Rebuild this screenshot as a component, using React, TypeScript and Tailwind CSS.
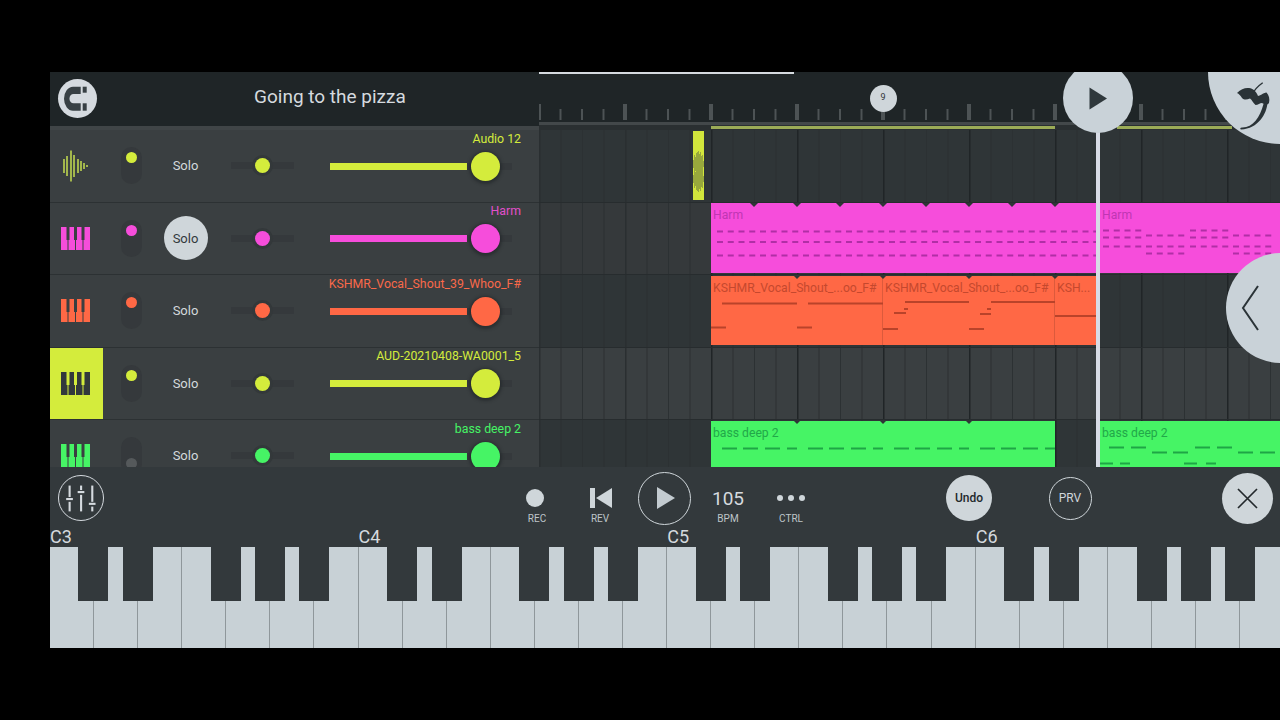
import type { ReactNode } from "react";

const LIME = "#d4ec3c";
const DARK_KEY = "#33393c";

type Note = [number, number, number]; // x, y, width in screen coords

const TRACKS = [
  { name: "Audio 12", color: "#d4ec3c", labelColor: "#d4ec3c", kind: "wave" },
  { name: "Harm", color: "#f64ddb", labelColor: "#e24fcb", kind: "keys", solo: true },
  { name: "KSHMR_Vocal_Shout_39_Whoo_F#", color: "#ff6845", labelColor: "#f9694a", kind: "keys" },
  { name: "AUD-20210408-WA0001_5", color: "#d4ec3c", labelColor: "#d4ec3c", kind: "keys", selected: true },
  { name: "bass deep 2", color: "#46f465", labelColor: "#46f465", kind: "keys", off: true },
];

function repeatDashes(start: number, end: number, ys: number[]): Note[] {
  const out: Note[] = [];
  for (const y of ys) {
    for (let x = start; x < end; x += 10.75) out.push([x, y, 6]);
  }
  return out;
}

const harmNotes: Note[] = [
  ...repeatDashes(717, 1096, [230, 240.5, 254]),
  ...repeatDashes(1103, 1142, [229, 236, 245]),
  ...repeatDashes(1146, 1183, [234, 245, 252]),
  ...repeatDashes(1190, 1228, [229, 236, 245]),
  ...repeatDashes(1233, 1271, [234, 245, 252]),
];

const orangeNotes: Note[] = [
  [722, 302.5, 75],
  [808, 302.5, 75],
  [711, 326.5, 15],
  [797, 326.5, 15],
  [905, 301, 64],
  [904, 308, 4],
  [894, 312, 12],
  [883, 328, 15],
  [991, 301, 64],
  [987, 308, 4],
  [980, 313, 11],
  [969, 328, 15],
  [1055, 315, 41],
];

const greenNotes: Note[] = [
  ...[722, 808, 894, 980].flatMap((x): Note[] => [
    [x, 447.5, 15],
    [x + 21, 447.5, 15],
    [x + 43, 447.5, 15],
    [x + 65, 447.5, 10],
  ]),
  [1109, 446.5, 15],
  [1131, 446.5, 15],
  [1152, 451.5, 15],
  [1173, 451.5, 15],
  [1195, 446.5, 15],
  [1217, 446.5, 15],
  [1238, 451.5, 15],
  [1260, 451.5, 15],
  [1100, 462.5, 13],
  [1120, 462.5, 10],
  [1184, 462.5, 13],
  [1206, 462.5, 10],
];

function PianoIcon({ fill, notch }: { fill: string; notch: string }) {
  return (
    <svg width="29" height="23" viewBox="0 0 29 23">
      {[0, 7.5, 15, 22.5].map((x) => (
        <rect key={x} x={x} width="6.5" height="23" fill={fill} />
      ))}
      {[5.5, 13, 20.5].map((x) => (
        <rect key={x} x={x} width="3" height="13" fill={notch} />
      ))}
    </svg>
  );
}

function WaveIcon() {
  const bars = [
    [3, 14],
    [6, 20],
    [10, 31],
    [13, 22],
    [17, 14],
    [20, 10],
    [23, 6],
    [26, 2],
  ];
  return (
    <svg width="28" height="32" viewBox="0 0 28 32">
      {bars.map(([x, h]) => (
        <rect key={x} x={x - 1} y={16 - h / 2} width="2" height={h} fill="#a2b64c" />
      ))}
    </svg>
  );
}

function TrackRow({ track }: { track: (typeof TRACKS)[number] }) {
  return (
    <div className="flex h-[72.5px] shrink-0 items-center border-b border-[#2c3133]">
      <div
        className={`flex h-full w-[53px] shrink-0 items-center justify-center pr-[3px] ${track.selected ? "bg-[#d4ec3c]" : ""}`}
      >
        {track.kind === "wave" ? (
          <WaveIcon />
        ) : (
          <PianoIcon
            fill={track.selected ? DARK_KEY : track.color}
            notch={track.selected ? LIME : "#3a3f41"}
          />
        )}
      </div>

      <div
        className={`ml-[17.5px] flex h-[37px] w-[21px] shrink-0 flex-col items-center rounded-full bg-[#35393c] py-[5px] ${track.off ? "justify-end" : "justify-start"}`}
      >
        <span
          className="size-[11px] rounded-full"
          style={{ backgroundColor: track.off ? "#55595b" : track.color }}
        />
      </div>

      <div
        className={`ml-[22px] flex size-11 shrink-0 items-center justify-center rounded-full text-[13px] ${track.solo ? "bg-[#cfd6da] text-[#33393c]" : "text-[#d3d9dc]"}`}
      >
        Solo
      </div>

      <div className="relative ml-[23.5px] flex h-[7px] w-[63px] shrink-0 items-center justify-center rounded-[1px] bg-[#35393c]">
        <span
          className="size-[15px] rounded-full shadow-[0_0_0_3px_#33383a]"
          style={{ backgroundColor: track.color }}
        />
      </div>

      <div className="ml-9 flex h-full w-[191px] shrink-0 flex-col items-end">
        <p
          className="mt-[0.5px] h-4 whitespace-nowrap text-[12.3px] leading-4"
          style={{ color: track.labelColor }}
        >
          {track.name}
        </p>
        <div className="relative mt-[5px] flex h-[29px] w-[191px] items-center">
          <div className="h-[7px] w-[182px] bg-[#35393c]">
            <div className="h-full w-[137px]" style={{ backgroundColor: track.color }} />
          </div>
          <span
            className="absolute left-[140.5px] top-0 size-[29px] rounded-full shadow-[0_1px_3px_2px_rgba(32,36,38,0.6)]"
            style={{ backgroundColor: track.color }}
          />
        </div>
      </div>
    </div>
  );
}

function Lane({
  top,
  className,
  children,
  notes,
  noteColor,
  marks = [],
}: {
  top: number;
  className: string;
  children?: ReactNode;
  notes?: Note[];
  noteColor?: string;
  marks?: number[];
}) {
  const box = `539 ${top} 741 72.5`;
  return (
    <div className={`relative h-[72.5px] shrink-0 overflow-hidden ${className}`}>
      <svg className="absolute inset-0 h-full w-full" viewBox={box}>
        {Array.from({ length: 35 }, (_, i) => {
          const x = 539 + 21.5 * i;
          const major = i % 4 === 0;
          return (
            <rect
              key={i}
              x={x}
              y={top}
              width={major ? 1.5 : 1}
              height="72.5"
              fill={major ? (x < 711 ? "#2a2f31" : "#202527") : "#2c3133"}
            />
          );
        })}
      </svg>
      {children}
      <svg className="absolute inset-0 h-full w-full" viewBox={box}>
        {notes?.map(([x, y, w], i) => (
          <rect key={i} x={x} y={y} width={w} height="2" fill={noteColor} />
        ))}
        {marks.map((x) => (
          <path key={x} d={`M${x - 4} ${top} h8 l-4 4 z`} fill="#2f3537" />
        ))}
      </svg>
      <div className="absolute inset-x-0 bottom-0 h-px bg-[#272c2e]" />
    </div>
  );
}

function Clip({ className, label, color }: { className: string; label: string; color: string }) {
  return (
    <div
      className={`absolute overflow-hidden whitespace-nowrap pl-[2px] text-[12.2px] leading-none ${className}`}
      style={{ color }}
    >
      <p className="mt-[6px]">{label}</p>
    </div>
  );
}

function Ruler() {
  return (
    <svg className="h-[50px] w-[741px]" viewBox="539 72 741 50">
      {Array.from({ length: 35 }, (_, i) => {
        const major = i % 4 === 0;
        const x = 539 + 21.5 * i;
        return (
          <rect
            key={i}
            x={major ? x - 2 : x - 1}
            y={major ? 104 : 109}
            width={major ? 4 : 2}
            height={major ? 16 : 11}
            fill="#4d5355"
          />
        );
      })}
    </svg>
  );
}

function Timeline() {
  return (
    <div className="relative h-full w-[741px] shrink-0 overflow-hidden">
      <div className="absolute left-0 top-0 h-[2px] w-[255px] bg-[#d5dadf]" />
      <div className="h-[50px] bg-[#1f2527]">
        <Ruler />
      </div>
      <div className="h-[3px] bg-[#43484a]" />
      <div className="relative h-[5px] bg-[#2a2f31]">
        <div className="absolute left-[172px] top-px h-[3px] w-[344px] bg-[#9bab57]" />
        <div className="absolute left-[578px] top-px h-[3px] w-[115px] bg-[#9bab57]" />
      </div>

      <Lane top={130} className="bg-[#2f3537]">
        <svg className="absolute left-[154px] top-[1px]" width="11" height="69" viewBox="0 0 11 69">
          <rect width="11" height="69" fill="#d2e63c" />
          {[8, 18, 14, 22, 24, 26, 20, 24, 16, 18, 6].map((h, x) => (
            <g key={x} fill="#98a83c">
              <rect x={x} y={33 - h / 2} width="1" height={h} />
              <rect x={x} y={48 - h / 2} width="1" height={h} />
            </g>
          ))}
        </svg>
      </Lane>

      <Lane
        top={202.5}
        className="bg-[#35393b]"
        notes={harmNotes}
        noteColor="#b02fa5"
        marks={[754, 797, 840, 883, 926, 969, 1012, 1055]}
      >
        <Clip className="left-[172px] top-[0.5px] h-[69.5px] w-[385px] bg-[#f64ddb]" label="Harm" color="#c036b3" />
        <Clip className="left-[561px] top-[0.5px] h-[69.5px] w-[180px] bg-[#f64ddb]" label="Harm" color="#c036b3" />
      </Lane>

      <Lane top={275} className="bg-[#2f3537]" notes={orangeNotes} noteColor="#b9432a" marks={[797, 883, 969, 1055]}>
        <Clip
          className="left-[172px] top-[0.5px] h-[69.5px] w-[172px] border-r border-[#dc5a3c] bg-[#ff6845]"
          label="KSHMR_Vocal_Shout_...oo_F#"
          color="#c5482e"
        />
        <Clip
          className="left-[344px] top-[0.5px] h-[69.5px] w-[172px] border-r border-[#dc5a3c] bg-[#ff6845]"
          label="KSHMR_Vocal_Shout_...oo_F#"
          color="#c5482e"
        />
        <Clip
          className="left-[516px] top-[0.5px] h-[69.5px] w-[41px] bg-[#ff6845]"
          label="KSH..."
          color="#c5482e"
        />
      </Lane>

      <Lane top={347.5} className="bg-[#3a3f41]" />

      <Lane top={420} className="bg-[#2f3537]" notes={greenNotes} noteColor="#1fa546" marks={[797, 883, 969]}>
        <Clip className="left-[172px] top-[0.5px] h-[72px] w-[344px] bg-[#46f465]" label="bass deep 2" color="#22a849" />
        <Clip className="left-[561px] top-[0.5px] h-[72px] w-[180px] bg-[#46f465]" label="bass deep 2" color="#22a849" />
      </Lane>

      {/* playhead and floating buttons */}
      <div className="absolute left-[557px] top-[50px] h-[345px] w-1 bg-[#d8dce6]" />
      <div className="absolute left-[330.5px] top-[12.5px] flex size-[27px] items-center justify-center rounded-full bg-[#cfd6da] text-[9px] text-[#2f3537]">
        9
      </div>
      <div className="absolute left-[524px] top-[-9px] flex size-[70px] items-center justify-center rounded-full bg-[#c9d2d8]">
        <svg width="20" height="23" viewBox="0 0 20 23">
          <path d="M1.5 0.5 L19 11.5 L1.5 22.5 Z" fill="#2f383c" />
        </svg>
      </div>
      <div className="absolute right-0 top-0 size-[72px] rounded-bl-full bg-[#c9d2d8]">
        <svg width="72" height="72" viewBox="0 0 72 72">
          <path
            d="M29 21 C33 17 37 15.5 41 16 C45 16.5 48 19 50 24 C52 24 55 21 58.5 20.5 C61 23 62 27 61 31 C59 33.5 56 32.5 54 31 C52 31 50 33 47.5 33 C45 31 44 28 42 26.5 C38.5 28 36 28 34 26 C32.5 23.5 31 22 29 21 Z"
            fill="#2a3337"
          />
          <path d="M54.7 10.7 C50 14 46 18 44 23" fill="none" stroke="#2a3337" strokeWidth="1.4" />
          <path
            d="M59.5 31 C58.5 42 50.5 56.5 33 57.5 C31.5 57 32.5 55 34.5 55.5 C45 55.5 52 45 55.5 32 Z"
            fill="#2a3337"
          />
        </svg>
      </div>
      <div className="absolute left-[687px] top-[181px] flex h-[110px] w-[110px] items-center rounded-full bg-[#c9d2d8]">
        <svg className="ml-[15px]" width="18" height="46" viewBox="0 0 18 46">
          <path d="M17 1 L2 23 L17 45" fill="none" stroke="#2a3337" strokeWidth="2" />
        </svg>
      </div>
    </div>
  );
}

function Magnet() {
  return (
    <div className="flex size-[39px] items-center justify-center rounded-full bg-[#d5dadf]">
      <svg width="39" height="39" viewBox="0 0 39 39">
        <path
          d="M22.7 7.7 H15 A9 12 0 0 0 15 31.7 H22.7 V24.3 H15.5 A4 4.6 0 0 1 15.5 15 H22.7 Z"
          fill="#384044"
        />
        <rect x="24.7" y="7.7" width="4" height="6" fill="#384044" />
        <rect x="24.7" y="24.3" width="4" height="7.4" fill="#384044" />
      </svg>
    </div>
  );
}

function MixerIcon() {
  const sliders = [
    { x: 11, y: 24 },
    { x: 23, y: 16.7 },
    { x: 34.7, y: 29 },
  ];
  return (
    <div className="ml-2 size-[46px] shrink-0 rounded-full border border-[#d5dadf]">
      <svg width="44" height="44" viewBox="0 0 46 46">
        {sliders.map(({ x, y }) => (
          <g key={x} fill="#d5dadf">
            <rect x={x - 1} y="10" width="2.2" height={y - 12} />
            <rect x={x - 3.5} y={y - 1} width="7" height="2.2" />
            <rect x={x - 1} y={y + 3} width="2.2" height={37 - y - 3} />
          </g>
        ))}
      </svg>
    </div>
  );
}

function TransportItem({ label, className, children }: { label: string; className: string; children: ReactNode }) {
  return (
    <div className={`mt-5 flex w-10 shrink-0 flex-col items-center self-start ${className}`}>
      <div className="flex h-[22px] items-center justify-center">{children}</div>
      <p className="mt-[4px] text-[10px] leading-[11px] text-[#bec5c9]">{label}</p>
    </div>
  );
}

function Transport() {
  return (
    <div className="flex h-[62px] w-full items-center bg-[#33393c]">
      <MixerIcon />
      <TransportItem label="REC" className="ml-[413px]">
        <span className="-ml-1 size-[18px] rounded-full bg-[#cfd6da]" />
      </TransportItem>
      <TransportItem label="REV" className="ml-[23px]">
        <svg className="ml-[2px]" width="22" height="20" viewBox="0 0 22 20">
          <rect width="5" height="20" fill="#cfd6da" />
          <path d="M22 0 V20 L6 10 Z" fill="#cfd6da" />
        </svg>
      </TransportItem>
      <div className="ml-[18px] flex size-[53px] shrink-0 items-center justify-center rounded-full border border-[#cfd6da]">
        <svg className="ml-[2px]" width="18" height="22" viewBox="0 0 18 22">
          <path d="M0 0 L18 11 L0 22 Z" fill="#c3cbd0" />
        </svg>
      </div>
      <TransportItem label="BPM" className="ml-[17px]">
        <span className="text-[19px] leading-none text-[#d5dadf]">105</span>
      </TransportItem>
      <TransportItem label="CTRL" className="ml-[23px]">
        <span className="flex gap-[4.6px]">
          <span className="size-[6.4px] rounded-full bg-[#cfd6da]" />
          <span className="size-[6.4px] rounded-full bg-[#cfd6da]" />
          <span className="size-[6.4px] rounded-full bg-[#cfd6da]" />
        </span>
      </TransportItem>
      <div className="ml-[135px] flex size-[46px] shrink-0 items-center justify-center rounded-full bg-[#cfd6da] text-[12px] font-medium text-[#23292c]">
        Undo
      </div>
      <div className="ml-[56.5px] flex size-[43px] shrink-0 items-center justify-center rounded-full border border-[#cfd6da] text-[12px] text-[#cfd6da]">
        PRV
      </div>
      <div className="ml-[130px] flex size-[51px] shrink-0 items-center justify-center rounded-full bg-[#cfd6da]">
        <svg width="21" height="21" viewBox="0 0 21 21">
          <path d="M1 1 L20 20 M20 1 L1 20" stroke="#23292c" strokeWidth="1.7" />
        </svg>
      </div>
    </div>
  );
}

const OCTAVE = 308.6;
const BLACK_OFFSETS = [28.4, 73, 160.7, 205, 249];

function Keyboard() {
  const blacks = [0, 1, 2, 3].flatMap((o) => BLACK_OFFSETS.map((b) => o * OCTAVE + b));
  const whites = Array.from({ length: 28 }, (_, i) => i);
  return (
    <div className="relative flex h-[101px] w-full overflow-hidden bg-[#c8d1d6]">
      {whites.map((i) => (
        <div key={i} className="h-full w-[44.09px] shrink-0 border-r border-[#8f979b]" />
      ))}
      {blacks.map((left) => (
        <div
          key={left}
          className="absolute top-0 h-[54px] w-[30px] bg-[#33393c]"
          style={{ left }}
        />
      ))}
    </div>
  );
}

export default function App() {
  return (
    <div className="h-[720px] w-[1280px] overflow-hidden bg-black pl-[50px] pt-[72px] font-['Roboto',sans-serif]">
      <div className="flex h-[395px] w-[1230px]">
        <div className="flex h-full w-[489px] shrink-0 flex-col overflow-hidden bg-[#3a3f41]">
          <div className="flex h-[54px] shrink-0 items-center bg-[#1f2527] pb-[2px]">
            <div className="ml-[7.5px]">
              <Magnet />
            </div>
            <h1 className="mb-[2px] ml-[157.5px] whitespace-nowrap text-[19px] text-[#d5dadf]">Going to the pizza</h1>
          </div>
          <div className="h-1 shrink-0 bg-[#404547]" />
          {TRACKS.map((track) => (
            <TrackRow key={track.name} track={track} />
          ))}
        </div>
        <Timeline />
      </div>

      <div className="w-[1230px]">
        <Transport />
        <div className="flex h-[18px] items-end bg-[#33393c] text-[18px] leading-[20px] text-[#d5dadf]">
          {["C3", "C4", "C5", "C6"].map((note) => (
            <span key={note} className="w-[308.6px] shrink-0">
              {note}
            </span>
          ))}
        </div>
        <Keyboard />
      </div>
    </div>
  );
}
